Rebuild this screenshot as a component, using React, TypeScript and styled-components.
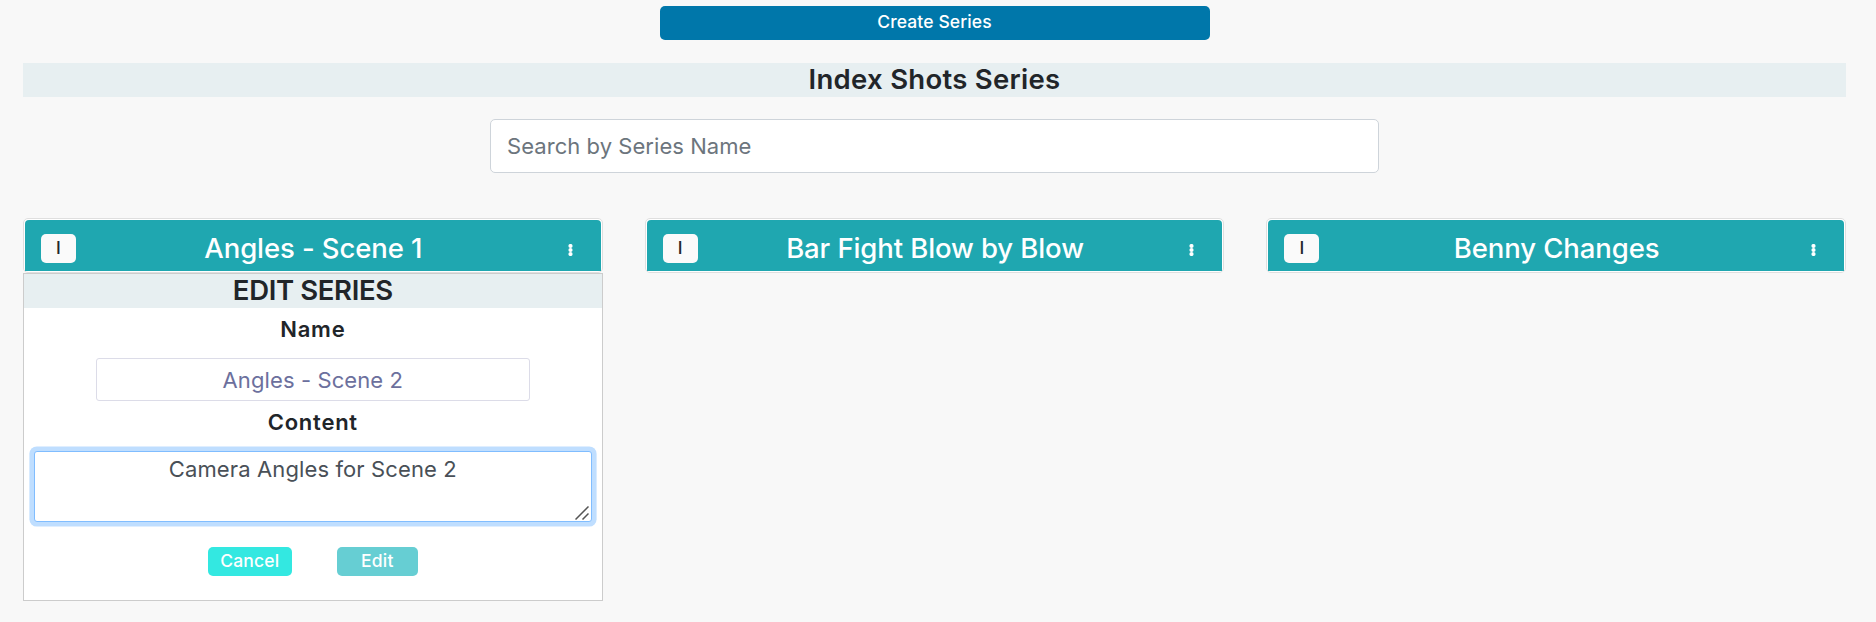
import React from "react";
import styled, { createGlobalStyle } from "styled-components";

const GlobalStyle = createGlobalStyle`
  *, *::before, *::after { box-sizing: border-box; }
  body {
    margin: 0;
    background: #f8f8f8;
    color: #212529;
    font-family: "Inter", "Liberation Sans", sans-serif;
    font-size: 22px;
  }
  button, input, textarea { font-family: inherit; margin: 0; }
`;

const Page = styled.main`
  min-height: 622px;
  padding: 6px 30px 0 23px;
  display: flex;
  flex-direction: column;
`;

const CreateButton = styled.button`
  align-self: center;
  width: 550px;
  height: 34px;
  padding: 0 0 3px;
  border: 0;
  border-radius: 5px;
  background: #0077aa;
  color: #fff;
  font-size: 17.5px;
  font-weight: 500;
  letter-spacing: 0.1px;
`;

const Banner = styled.h2<{ $tracking: string }>`
  margin: 0;
  height: 34px;
  line-height: 33px;
  background: #e7eff1;
  text-align: center;
  font-size: 27.5px;
  font-weight: 600;
  letter-spacing: ${(p) => p.$tracking};
`;

const PageTitle = styled(Banner)`
  margin: 23px 0 22px;
`;

const Search = styled.input`
  align-self: center;
  width: 889px;
  height: 54px;
  padding: 0 16px;
  border: 1px solid #ced4da;
  border-radius: 5px;
  background: #fff;
  font-size: 22px;
  letter-spacing: 0.05px;
  outline: none;
  &::placeholder { color: #6c757d; opacity: 1; }
`;

const Columns = styled.section`
  display: grid;
  grid-template-columns: repeat(3, minmax(0, 1fr));
  column-gap: 42px;
  align-items: start;
  margin-top: 45px;
`;

const CardFrame = styled.article`
  height: 55px;
  padding: 1px;
  border: 1px solid #dfdfdf;
  border-radius: 5px;
  background: #fff;
`;

const CardHeader = styled.header`
  display: grid;
  grid-template-columns: 35px 1fr 35px;
  align-items: center;
  height: 51px;
  padding: 0 15px 0 16px;
  border-radius: 4px 4px 0 0;
  background: #1fa7b0;
  color: #fff;
`;

const Badge = styled.button`
  height: 29px;
  margin-top: 5px;
  padding: 0 0 2px;
  border: 0;
  border-radius: 5px;
  background: #fafafa;
  color: #212529;
  font-size: 17.5px;
  font-weight: 500;
`;

const CardTitle = styled.h3`
  margin: 0;
  padding-top: 4px;
  text-align: center;
  font-size: 27.5px;
  line-height: 34px;
  font-weight: 450;
  letter-spacing: -0.1px;
  white-space: nowrap;
`;

const MenuIcon = styled.svg`
  display: block;
  justify-self: center;
  margin: 9px 0 0 4px;
`;

const EditPanel = styled.form`
  display: flex;
  flex-direction: column;
  height: 328px;
  border: 1px solid #cccccc;
  background: #fff;
`;

const FieldLabel = styled.label<{ $top: number }>`
  margin-top: ${(p) => p.$top}px;
  height: 30px;
  line-height: 30px;
  text-align: center;
  font-size: 22px;
  font-weight: 600;
  letter-spacing: 0.75px;
`;

const NameInput = styled.input`
  align-self: center;
  width: 434px;
  height: 43px;
  margin-top: 14px;
  padding: 0 10px;
  border: 1px solid #dcdce8;
  border-radius: 3px;
  background: #fff;
  color: #6c709d;
  text-align: center;
  font-size: 22px;
  letter-spacing: 0.1px;
  outline: none;
`;

const ContentField = styled.div`
  position: relative;
  align-self: center;
  width: 558px;
  height: 71px;
  margin-top: 14px;
`;

const ContentArea = styled.textarea`
  display: block;
  width: 100%;
  height: 100%;
  padding: 3px 10px;
  border: 1px solid #80bdff;
  border-radius: 3px;
  box-shadow: 0 0 0 4.6px #bfdeff;
  background: #fff;
  color: #495057;
  text-align: center;
  font-size: 22px;
  line-height: 28px;
  letter-spacing: 0.12px;
  outline: none;
  resize: none;
`;

const ResizeGrip = styled.svg`
  position: absolute;
  right: 3px;
  bottom: 2px;
  pointer-events: none;
`;

const Actions = styled.div`
  display: flex;
  justify-content: center;
  gap: 45px;
  margin-top: 25px;
`;

const ActionButton = styled.button<{ $width: number; $fill: string }>`
  width: ${(p) => p.$width}px;
  height: 29px;
  padding: 0 0 2px;
  border: 0;
  border-radius: 5px;
  background: ${(p) => p.$fill};
  color: #fff;
  font-size: 17.5px;
  font-weight: 500;
  letter-spacing: 0.2px;
`;

const MoreDots = () => (
  <MenuIcon width="5" height="12" viewBox="0 0 5 12" fill="#fff" aria-hidden="true">
    <circle cx="2.5" cy="2" r="2.1" />
    <circle cx="2.5" cy="6" r="2.1" />
    <circle cx="2.5" cy="10" r="2.1" />
  </MenuIcon>
);

const SeriesCard = ({ title }: { title: string }) => (
  <CardFrame>
    <CardHeader>
      <Badge type="button">I</Badge>
      <CardTitle>{title}</CardTitle>
      <MoreDots />
    </CardHeader>
  </CardFrame>
);

const EditSeries = () => (
  <EditPanel>
    <Banner $tracking="-0.35px">EDIT SERIES</Banner>
    <FieldLabel $top={6} htmlFor="series-name">Name</FieldLabel>
    <NameInput id="series-name" defaultValue="Angles - Scene 2" />
    <FieldLabel $top={6} htmlFor="series-content">Content</FieldLabel>
    <ContentField>
      <ContentArea id="series-content" defaultValue="Camera Angles for Scene 2" />
      <ResizeGrip width="14" height="14" viewBox="0 0 14 14" stroke="#555" strokeWidth="1.5" aria-hidden="true">
        <path d="M0.5 13.5L13.5 0.5M7.5 13.5L13.5 7.5" />
      </ResizeGrip>
    </ContentField>
    <Actions>
      <ActionButton type="button" $width={84} $fill="#33e8e1">Cancel</ActionButton>
      <ActionButton type="button" $width={81} $fill="#66ced3">Edit</ActionButton>
    </Actions>
  </EditPanel>
);

export default function App() {
  return (
    <>
      <GlobalStyle />
      <Page>
        <CreateButton type="button">Create Series</CreateButton>
        <PageTitle $tracking="0.28px">Index Shots Series</PageTitle>
        <Search placeholder="Search by Series Name" />
        <Columns>
          <div>
            <SeriesCard title="Angles - Scene 1" />
            <EditSeries />
          </div>
          <SeriesCard title="Bar Fight Blow by Blow" />
          <SeriesCard title="Benny Changes" />
        </Columns>
      </Page>
    </>
  );
}
